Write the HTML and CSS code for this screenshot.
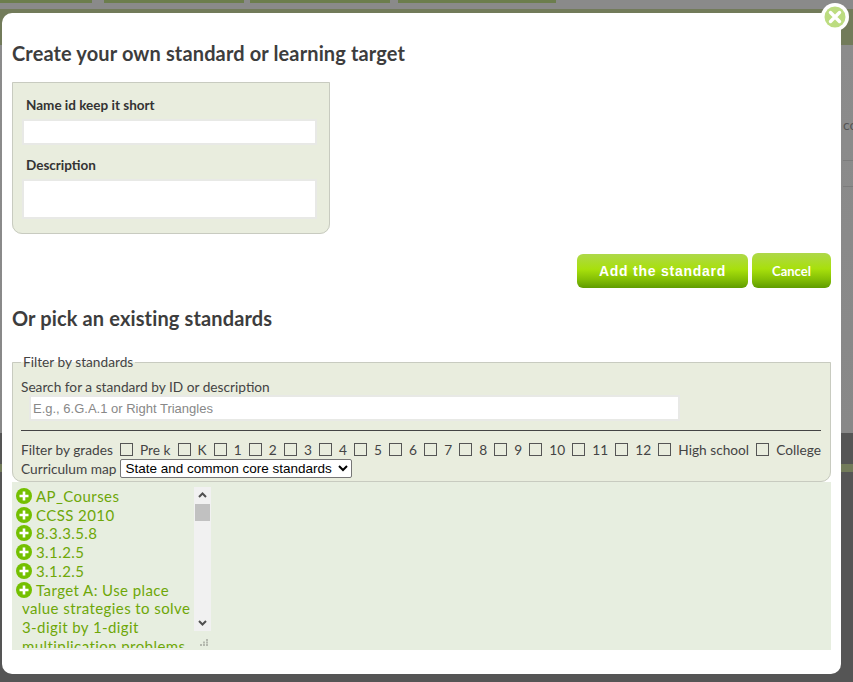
FILE: index.html
```html
<!DOCTYPE html>
<html>
<head>
    <link rel="stylesheet" href="styles.css">
</head>
<body>
    <div class="page">
        <div class="tabs">
            <div class="tab tab-a"></div>
            <div class="tab tab-b"></div>
            <div class="tab tab-c"></div>
            <div class="tab tab-d"></div>
        </div>
        <div class="band"></div>
        <div class="page-body">
            <div class="page-text">co</div>
            <div class="page-rule"></div>
            <div class="page-rule"></div>
        </div>
        <div class="page-foot">
            <div class="foot-band"></div>
        </div>
    </div>

    <div class="modal">
        <a class="close" href="#">
            <svg width="28" height="28" viewBox="0 0 28 28">
                <circle cx="14" cy="14" r="14" fill="#fff"/>
                <circle cx="14" cy="14" r="10.5" fill="#bcdc80"/>
                <path d="M9.5 9.5 L18.5 18.5 M18.5 9.5 L9.5 18.5" stroke="#fff" stroke-width="3.4" stroke-linecap="round"/>
            </svg>
        </a>

        <h2 class="title first">Create your own standard or learning target</h2>

        <fieldset class="own-box">
            <label class="own-label">Name id keep it short</label>
            <input class="own-input" type="text">
            <label class="own-label own-label-desc">Description</label>
            <textarea class="own-area"></textarea>
        </fieldset>

        <div class="actions">
            <button class="btn btn-add">Add the standard</button>
            <button class="btn btn-cancel">Cancel</button>
        </div>

        <h2 class="title second">Or pick an existing standards</h2>

        <fieldset class="filter-box">
            <legend>Filter by standards</legend>
            <div class="search-label">Search for a standard by ID or description</div>
            <input class="search-input" type="text" placeholder="E.g., 6.G.A.1 or Right Triangles">
            <hr class="divider">
            <div class="grades">
                <span class="grades-title">Filter by grades</span>
                <label class="grade"><input type="checkbox">Pre k</label>
                <label class="grade"><input type="checkbox">K</label>
                <label class="grade"><input type="checkbox">1</label>
                <label class="grade"><input type="checkbox">2</label>
                <label class="grade"><input type="checkbox">3</label>
                <label class="grade"><input type="checkbox">4</label>
                <label class="grade"><input type="checkbox">5</label>
                <label class="grade"><input type="checkbox">6</label>
                <label class="grade"><input type="checkbox">7</label>
                <label class="grade"><input type="checkbox">8</label>
                <label class="grade"><input type="checkbox">9</label>
                <label class="grade"><input type="checkbox">10</label>
                <label class="grade"><input type="checkbox">11</label>
                <label class="grade"><input type="checkbox">12</label>
                <label class="grade"><input type="checkbox">High school</label>
                <label class="grade"><input type="checkbox">College</label>
            </div>
            <div class="map-row">
                <span>Curriculum map</span>
                <select class="map-select">
                    <option>State and common core standards</option>
                </select>
            </div>
        </fieldset>

        <div class="tree-panel">
            <div class="tree-box">
                <ul class="tree">
                    <li><svg class="plus" viewBox="0 0 16 16"><circle cx="8" cy="8" r="8"/><path d="M8 3.5 V12.5 M3.5 8 H12.5"/></svg>AP_Courses</li>
                    <li><svg class="plus" viewBox="0 0 16 16"><circle cx="8" cy="8" r="8"/><path d="M8 3.5 V12.5 M3.5 8 H12.5"/></svg>CCSS 2010</li>
                    <li><svg class="plus" viewBox="0 0 16 16"><circle cx="8" cy="8" r="8"/><path d="M8 3.5 V12.5 M3.5 8 H12.5"/></svg>8.3.3.5.8</li>
                    <li><svg class="plus" viewBox="0 0 16 16"><circle cx="8" cy="8" r="8"/><path d="M8 3.5 V12.5 M3.5 8 H12.5"/></svg>3.1.2.5</li>
                    <li><svg class="plus" viewBox="0 0 16 16"><circle cx="8" cy="8" r="8"/><path d="M8 3.5 V12.5 M3.5 8 H12.5"/></svg>3.1.2.5</li>
                    <li><svg class="plus" viewBox="0 0 16 16"><circle cx="8" cy="8" r="8"/><path d="M8 3.5 V12.5 M3.5 8 H12.5"/></svg>Target A: Use place value strategies to solve 3-digit by 1-digit multiplication problems</li>
                </ul>
                <div class="scrollbar">
                    <svg class="arrow" viewBox="0 0 17 17"><path d="M5 10 L8.5 6.5 L12 10"/></svg>
                    <div class="track"><div class="thumb"></div></div>
                    <svg class="arrow" viewBox="0 0 17 17"><path d="M5 7 L8.5 10.5 L12 7"/></svg>
                </div>
                <svg class="grip" viewBox="0 0 8 7"><path d="M6 0h2v2H6zM3 2.500h2v2H3zM6 2.500h2v2H6zM0 5h2v2H0zM3 5h2v2H3zM6 5h2v2H6z"/></svg>
            </div>
        </div>
    </div>
</body>
</html>
```

FILE: styles.css
```css
html, body {
    margin: 0;
    padding: 0;
    height: 682px;
    overflow: hidden;
}
body {
    position: relative;
    font-family: Lato, Arial, sans-serif;
    background-color: #8a8a8a;
    color: #3f3f3f;
}

/* dimmed page behind the dialog */
.page {
    height: 682px;
    display: flex;
    flex-direction: column;
}
.tabs {
    height: 3px;
    display: flex;
}
.tab {
    background-color: #6c7d4d;
}
.tab-a { width: 92px; margin-right: 12px; }
.tab-b { width: 140px; margin-right: 6px; }
.tab-c { width: 140px; margin-right: 8px; }
.tab-d { width: 158px; }
.band {
    margin-top: 6px;
    height: 36px;
    background-color: #727b5a;
}
.page-body {
    height: 388px;
    padding: 70px 0 0 843px;
    box-sizing: border-box;
    background: linear-gradient(#8c8c8c, #888);
}
.page-text {
    font-size: 14px;
    line-height: 20px;
    color: #555;
}
.page-rule {
    height: 1px;
    margin-top: 25px;
    width: 10px;
    background-color: #7c7c7c;
}
.page-foot {
    flex: 1;
    padding-top: 31px;
    background-color: #555;
}
.foot-band {
    height: 8px;
    background-color: #727b5a;
}

/* dialog */
.modal {
    position: absolute;
    left: 2px;
    top: 13px;
    width: 839px;
    height: 661px;
    box-sizing: border-box;
    padding: 0 10px;
    background-color: #fff;
    border-radius: 10px;
}
.close {
    position: absolute;
    top: -10px;
    right: -8px;
    width: 28px;
    height: 28px;
}
.title {
    margin: 0;
    font-size: 20px;
    letter-spacing: 0.13px;
    line-height: 26px;
    font-weight: bold;
    color: #3d3d3d;
}
.title.first {
    padding-top: 27px;
}
.title.second {
    padding-top: 17px;
}
.own-box {
    margin: 16px 0 0;
    padding: 12px 12px 14px 9px;
    width: 318px;
    height: 152px;
    box-sizing: border-box;
    min-width: 0;
    background-color: #e9edde;
    border: 1px solid #c8cbc0;
    border-radius: 0 0 10px 10px;
}
.own-label {
    display: block;
    padding-left: 4px;
    font-size: 13.5px;
    line-height: 20px;
    font-weight: bold;
    color: #333;
}
.own-label-desc {
    margin-top: 10px;
}
.own-input, .own-area {
    display: block;
    width: 295px;
    box-sizing: border-box;
    margin: 4px 0 0;
    padding: 0;
    background-color: #fff;
    border: 2px solid #e8e9e6;
    outline: none;
    resize: none;
}
.own-input {
    height: 26px;
}
.own-area {
    height: 40px;
}
.actions {
    display: flex;
    justify-content: flex-end;
    align-items: flex-end;
    gap: 4px;
    margin-top: 19px;
    height: 35px;
}
.btn {
    padding: 0;
    border: 0;
    border-radius: 6px;
    color: #fff;
    font-weight: bold;
    background: linear-gradient(#aed84a 0%, #a8e00c 45%, #84bf05 75%, #5f9c00 100%);
}
.btn-add {
    width: 171px;
    height: 34px;
    font-family: "Liberation Sans", Arial, sans-serif;
    font-size: 14px;
    letter-spacing: 0.75px;
}
.btn-cancel {
    width: 79px;
    height: 35px;
    font-family: Lato, Arial, sans-serif;
    font-size: 13px;
}
.filter-box {
    margin: 23px 0 0;
    padding: 0 9px 0 8px;
    height: 128px;
    box-sizing: border-box;
    min-width: 0;
    font-size: 13.7px;
    background-color: #e9edde;
    border: 1px solid #c8cbc0;
    border-radius: 0 0 10px 10px;
    color: #444;
}
.filter-box legend {
    padding: 0 2px;
    margin-left: 0;
    font-size: 13.7px;
    line-height: 16px;
}
.search-label {
    margin-top: 8px;
    line-height: 17px;
}
.search-input {
    display: block;
    width: 651px;
    height: 26px;
    box-sizing: border-box;
    margin: 0 0 0 8px;
    padding: 0 2px;
    font-family: "Liberation Sans", Arial, sans-serif;
    font-size: 13px;
    background-color: #fff;
    border: 2px solid #e8e9e6;
    outline: none;
}
.search-input::placeholder {
    color: #888;
}
.divider {
    margin: 9px 0 0;
    border: 0;
    height: 1px;
    background-color: #444;
}
.grades {
    display: flex;
    align-items: center;
    justify-content: space-between;
    margin-top: 9px;
    height: 19px;
}
.grade {
    display: flex;
    align-items: center;
}
.grade input {
    appearance: none;
    width: 13px;
    height: 13px;
    margin: 0 7px 0 0;
    border: 1px solid #555;
    background: transparent;
}
.map-row {
    display: flex;
    align-items: center;
    gap: 4px;
    height: 19px;
    margin-top: 0;
}
.map-select {
    width: 232px;
    height: 19px;
    padding: 0;
    font-family: "Liberation Sans", Arial, sans-serif;
    font-size: 13.5px;
    color: #000;
    background-color: #fff;
    border: 1px solid #767676;
    border-radius: 2px;
}
.tree-panel {
    height: 168px;
    padding-top: 5px;
    box-sizing: border-box;
    background-color: #e7eee0;
}
.tree-box {
    position: relative;
    width: 199px;
    height: 161px;
    display: flex;
    overflow: hidden;
}
.tree {
    flex: 1;
    margin: 0;
    padding: 0 0 0 10px;
    list-style: none;
    font-size: 15px;
    letter-spacing: 0.42px;
    line-height: 18.7px;
    color: #6ea708;
    overflow: hidden;
}
.tree li {
    text-indent: -6px;
}
.plus {
    width: 16px;
    height: 16px;
    margin-right: 4px;
    vertical-align: -2px;
}
.plus circle {
    fill: #74c000;
}
.plus path {
    fill: none;
    stroke: #fff;
    stroke-width: 2.6;
}
.scrollbar {
    width: 17px;
    height: 144px;
    display: flex;
    flex-direction: column;
    background-color: #f1f1f1;
}
.arrow {
    width: 17px;
    height: 17px;
    flex: none;
}
.arrow path {
    fill: none;
    stroke: #505050;
    stroke-width: 2;
}
.track {
    flex: 1;
}
.thumb {
    height: 17px;
    margin: 0 1px;
    background-color: #c1c1c1;
}
.grip {
    position: absolute;
    right: 3px;
    bottom: 2px;
    width: 8px;
    height: 7px;
    fill: #b4b8ae;
}
```
